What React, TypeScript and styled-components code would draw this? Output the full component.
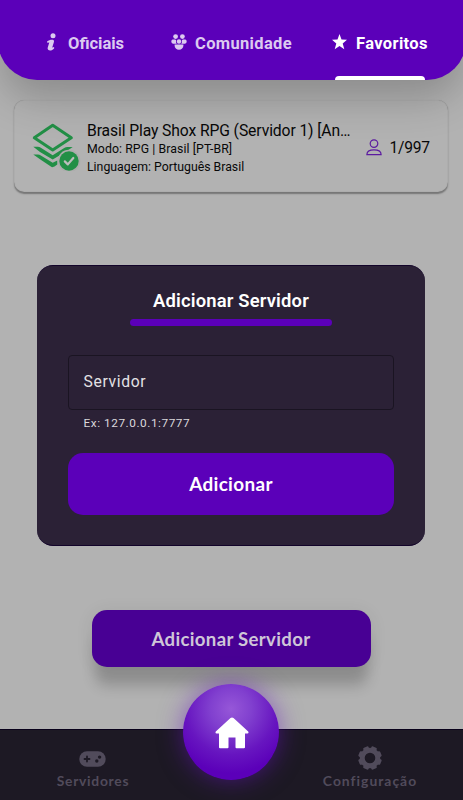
import React from "react";
import styled, { createGlobalStyle } from "styled-components";

const GlobalStyle = createGlobalStyle`
  * { box-sizing: border-box; }
  html, body { margin: 0; padding: 0; }
  body { background: #b2b2b2; font-family: Roboto, sans-serif; overflow: hidden; }
  svg { display: block; flex: none; }
`;

const Screen = styled.div`
  position: relative;
  width: 463px;
  height: 800px;
  overflow: hidden;
  display: flex;
  flex-direction: column;
  background: #b2b2b2;
`;

const Header = styled.header`
  position: relative;
  z-index: 1;
  flex: none;
  height: 80.4px;
  margin: 0 -2.5px -0.4px;
  background: #5b00b9;
  border-radius: 0 0 39px 39px;
  box-shadow: 0 22px 40px -4px rgba(0, 0, 0, 0.22);
`;

const Tabs = styled.nav`
  display: grid;
  grid-template-columns: 125px 161px 96px;
  height: 80.4px;
  padding: 7px 0 0 48.5px;
`;

const Tab = styled.div<{ $active?: boolean; $iconWidth: number; $spacing: number }>`
  position: relative;
  display: grid;
  grid-template-columns: ${(p) => p.$iconWidth}px max-content;
  align-items: center;
  justify-content: start;
  color: ${(p) => (p.$active ? "#fff" : "#dccaf0")};
  font-size: 16.5px;
  font-weight: 700;
  letter-spacing: ${(p) => p.$spacing}px;
  svg { margin-top: -4px; }
`;

const Indicator = styled.span`
  position: absolute;
  left: 3px;
  bottom: 0;
  width: 89.5px;
  height: 4.4px;
  border-radius: 4px 4px 0 0;
  background: #fff;
`;

const Content = styled.main`
  flex: 1;
  display: flex;
  flex-direction: column;
  align-items: center;
  justify-content: space-between;
  padding: 20px 15px 62px 14px;
`;

const ServerCard = styled.article`
  display: flex;
  width: 434px;
  height: 92px;
  padding: 21px 0 0 18px;
  border-radius: 10px;
  background: #b2b2b2;
  box-shadow: 0 1.5px 1.5px rgba(0, 0, 0, 0.34), inset 0 0 1px rgba(0, 0, 0, 0.25);
  color: #080808;
`;

const ServerInfo = styled.div`
  width: 276px;
  margin-left: 6px;
  white-space: nowrap;
`;

const ServerName = styled.div`
  font-size: 15.7px;
  line-height: 20px;
  letter-spacing: -0.11px;
`;

const ServerMeta = styled.div<{ $spacing?: number }>`
  font-size: 12.3px;
  line-height: 17.5px;
  letter-spacing: ${(p) => p.$spacing ?? 0}px;
`;

const Players = styled.div`
  display: flex;
  align-items: center;
  gap: 8px;
  height: 54px;
  margin-left: 2.5px;
  font-size: 15.6px;
  letter-spacing: -0.25px;
  svg { margin-top: -1px; }
`;

const OpenDialogButton = styled.button`
  width: 279px;
  height: 57px;
  border: 0;
  padding: 0;
  border-radius: 15px;
  background: #480094;
  box-shadow: 0 22px 14px -3px rgba(0, 0, 0, 0.19), 0 2px 18px rgba(0, 0, 0, 0.08);
  color: #cfc6d8;
  font: 700 18.6px Lato, sans-serif;
  letter-spacing: 0.32px;
`;

const Footer = styled.footer`
  position: relative;
  flex: none;
  display: flex;
  justify-content: space-between;
  height: 71px;
  padding: 16px 44px 0 55px;
  background: #1d1924;
  border-top: 1px solid #08001a;
`;

const NavItem = styled.div<{ $width: number; $spacing: number }>`
  display: flex;
  flex-direction: column;
  align-items: center;
  width: ${(p) => p.$width}px;
  color: #514b5b;
  font: 700 13.9px/20px Lato, sans-serif;
  letter-spacing: ${(p) => p.$spacing}px;
  white-space: nowrap;
`;

const IconSlot = styled.div<{ $top: number }>`
  height: 25px;
  padding-top: ${(p) => p.$top}px;
  svg { margin-left: -1px; }
`;

const HomeButton = styled.button`
  position: absolute;
  left: 183px;
  top: -46px;
  display: grid;
  place-items: center;
  width: 96px;
  height: 96px;
  padding: 2px 0 0 1px;
  border: 0;
  border-radius: 50%;
  background: radial-gradient(circle at 50% 26%, #9657d8 0%, #8140cf 24%, #6715c0 53%, #5b00b9 75%);
  box-shadow: 0 0 24px rgba(105, 20, 196, 0.55);
`;

const Dialog = styled.section`
  position: absolute;
  z-index: 2;
  left: 37px;
  top: 265px;
  display: flex;
  flex-direction: column;
  width: 388px;
  height: 281px;
  padding: 23px 31px 30px;
  border-radius: 16px;
  background: #2b2136;
  border: solid #13042a;
  border-width: 1px 0;
`;

const DialogTitle = styled.h1`
  margin: 0;
  height: 23px;
  flex: none;
  color: #fff;
  font: 600 18.4px/23px Roboto, sans-serif;
  letter-spacing: 0.17px;
  text-align: center;
`;

const TitleRule = styled.div`
  width: 202px;
  height: 7px;
  margin: 7px 0 28.5px 62px;
  flex: none;
  border-radius: 4px;
  background: #5b00b9;
`;

const Field = styled.div`
  flex: none;
  display: flex;
  align-items: center;
  height: 55px;
  padding: 0 0 2px 14.5px;
  border: 1px solid #1a1422;
  border-radius: 4px;
  color: #e3e1e5;
  font-size: 15.7px;
  letter-spacing: 0.65px;
`;

const Hint = styled.div`
  flex: 1;
  padding: 4px 0 0 15.5px;
  color: #dad8dc;
  font-size: 11.8px;
  line-height: 18px;
  letter-spacing: 0.55px;
`;

const SubmitButton = styled.button`
  flex: none;
  height: 62px;
  padding: 0 0 1px;
  border: 0;
  border-radius: 15px;
  background: #5b00b9;
  color: #fff;
  font: 700 18.9px Lato, sans-serif;
  letter-spacing: 0.35px;
`;

const InfoIcon = () => (
  <svg width="11" height="18" viewBox="0 0 11 18" fill="currentColor">
    <circle cx="7" cy="2.8" r="2.5" />
    <path d="M1.2 8.3C2.8 7 5.3 6.4 6.9 6.8c1.4.4 1.3 1.6.8 3L6.3 14.2c.3.5 1 .1 1.8-.3v1.5C6.6 17.3 3.8 18 2.4 17c-.9-.6-.9-1.7-.5-2.9l1.4-4.5-2.1.2Z" />
  </svg>
);

const CommunityIcon = () => (
  <svg width="16" height="18" viewBox="0 0 16 18" fill="currentColor">
    <circle cx="4.6" cy="3.6" r="2.4" />
    <circle cx="11.4" cy="3.6" r="2.4" />
    <circle cx="8" cy="8.5" r="2.2" />
    <path d="M.3 8.4C.3 6.7 1.4 6.500 3 6.500c1.300 0 2 .3 2.200.9-.4 1.200-.2 2.400.6 3.300H2Q.3 10.300.3 8.400ZM15.700 8.400c0-1.700-1.100-1.900-2.700-1.900-1.300 0-2 .3-2.200.9.4 1.200.2 2.400-.6 3.300H14q1.700-.4 1.700-2.300ZM3.600 11.600h8.800v1c0 2.500-1.900 4.200-4.400 4.200s-4.400-1.700-4.400-4.200Z" />
  </svg>
);

const StarIcon = () => (
  <svg width="15" height="16" viewBox="0 0 15 16" fill="currentColor">
    <path d="m7.5 0 2 5.6 5.5.2-4.3 3.6 1.6 5.8-4.8-3.3-4.8 3.3 1.6-5.8L0 5.8l5.5-.2Z" />
  </svg>
);

const LayersIcon = () => (
  <svg width="49" height="50" viewBox="0 0 49 50" fill="none">
    <path d="M20.7 4.300 39.300 16.800 20.700 28.900 2.300 16.800Z" stroke="#228f46" strokeWidth="3" strokeLinejoin="round" />
    <path d="M1.300 25.800h4.500q1.800.1 3 .9l11.900 7.500 11.500-7.300q1.500-1 3.500-1h5l-6.500 4.500-13.500 8.100L8 31Z" fill="#228f46" />
    <path d="M1.300 33.600h4.500q1.800.1 3 .9l11.900 7.200 4.600-2.200v4.100q-3.600 3-5.700 2.500L8 38.200Z" fill="#228f46" />
    <circle cx="37" cy="40" r="11.3" fill="#acacac" />
    <circle cx="37" cy="40" r="9.7" fill="#228f46" />
    <path d="m32.800 40.400 3 3 5.500-6.400" stroke="#bdbdbd" strokeWidth="2.2" strokeLinecap="round" strokeLinejoin="round" />
  </svg>
);

const PersonIcon = () => (
  <svg width="16" height="17" viewBox="0 0 16 17" fill="none" stroke="#5c1ba0" strokeWidth="1.2">
    <circle cx="8" cy="4.6" r="3.8" />
    <path d="M.9 15.6C.9 12.4 3.5 10.8 8 10.8s7.1 1.6 7.1 4.8Z" />
  </svg>
);

const GamepadIcon = () => (
  <svg width="27" height="16" viewBox="0 0 27 16">
    <rect x=".3" y=".3" width="26.4" height="15.4" rx="7.7" fill="currentColor" />
    <path d="M5.500 8h5M8 5.500v5" stroke="#1d1924" strokeWidth="1.8" strokeLinecap="round" />
    <circle cx="20.6" cy="6.1" r="1.7" fill="#1d1924" />
    <circle cx="17.8" cy="10" r="1.7" fill="#1d1924" />
  </svg>
);

const TEETH = [0, 45, 90, 135, 180, 225, 270, 315];

const GearIcon = () => (
  <svg width="24" height="24" viewBox="0 0 24 24" fill="currentColor">
    <circle cx="12" cy="12" r="7.8" fill="none" stroke="currentColor" strokeWidth="5" />
    {TEETH.map((angle) => (
      <rect key={angle} x="9.1" y=".2" width="5.8" height="4" rx="1.3" transform={`rotate(${angle + 22.5} 12 12)`} />
    ))}
  </svg>
);

const HomeIcon = () => (
  <svg width="34" height="32" viewBox="0 0 34 32" fill="#fff">
    <path d="M15.500 1.100q1.500-1.200 3 0L33.200 14.400q.9 1.600-.8 2.100H30v13.700q0 1-1 1h-7.500q-1 0-1-1V20.500h-7v9.700q0 1-1 1H5q-1 0-1-1V16.500H1.600q-1.700-.5-.8-2.100Z" />
  </svg>
);

export default function App() {
  return (
    <>
      <GlobalStyle />
      <Screen>
        <Header>
          <Tabs>
            <Tab $iconWidth={22} $spacing={0}><InfoIcon />Oficiais</Tab>
            <Tab $iconWidth={24} $spacing={0.34}><CommunityIcon />Comunidade</Tab>
            <Tab $active $iconWidth={24} $spacing={0.36}><StarIcon />Favoritos<Indicator /></Tab>
          </Tabs>
        </Header>
        <Content>
          <ServerCard>
            <LayersIcon />
            <ServerInfo>
              <ServerName>Brasil Play Shox RPG (Servidor 1) [An…</ServerName>
              <ServerMeta $spacing={0.08}>Modo: RPG | Brasil [PT-BR]</ServerMeta>
              <ServerMeta>Linguagem: Português Brasil</ServerMeta>
            </ServerInfo>
            <Players><PersonIcon />1/997</Players>
          </ServerCard>
          <OpenDialogButton>Adicionar Servidor</OpenDialogButton>
        </Content>
        <Footer>
          <NavItem $width={76} $spacing={0.7}><IconSlot $top={5}><GamepadIcon /></IconSlot>Servidores</NavItem>
          <HomeButton aria-label="Home"><HomeIcon /></HomeButton>
          <NavItem $width={98} $spacing={1}><IconSlot $top={0}><GearIcon /></IconSlot>Configuração</NavItem>
        </Footer>
        <Dialog role="dialog">
          <DialogTitle>Adicionar Servidor</DialogTitle>
          <TitleRule />
          <Field>Servidor</Field>
          <Hint>Ex: 127.0.0.1:7777</Hint>
          <SubmitButton>Adicionar</SubmitButton>
        </Dialog>
      </Screen>
    </>
  );
}
